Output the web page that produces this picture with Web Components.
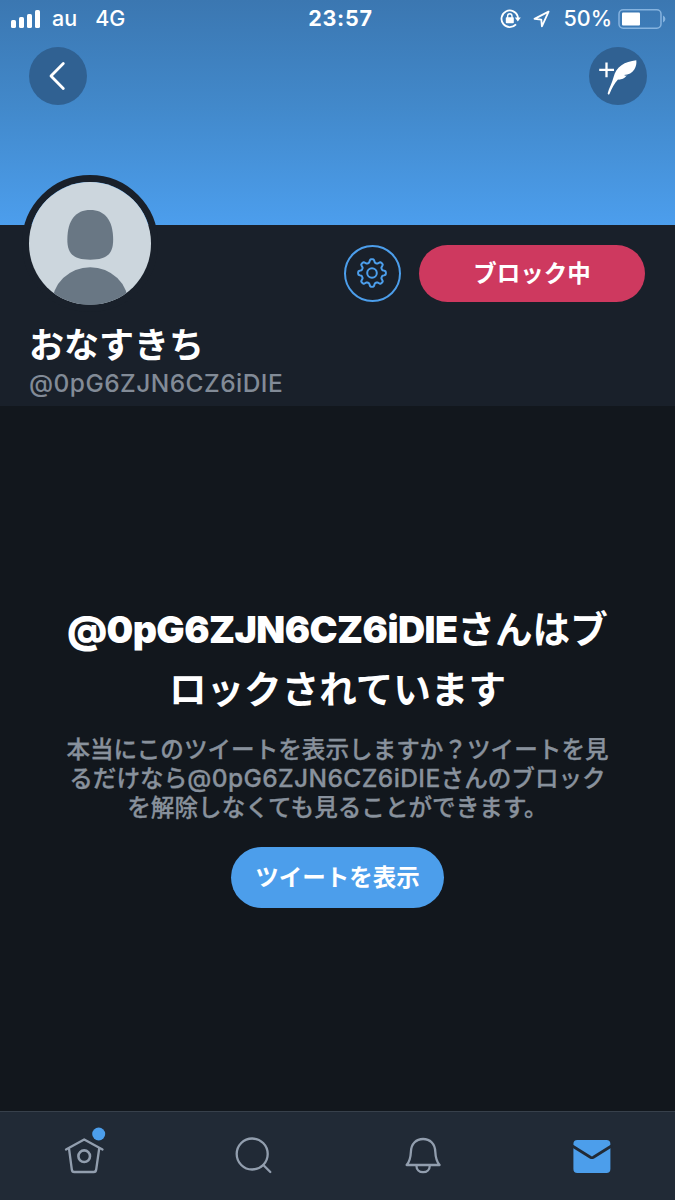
<!DOCTYPE html>
<html lang="ja">
<head>
<meta charset="utf-8">
<title>おなすきち</title>
<style>
html, body {
	margin: 0;
	height: 100%;
	background: #12171d;
}
</style>
</head>
<body>
<profile-page></profile-page>

<script>
const define = (name, html) => {
    const template = document.createElement("template");

    template.innerHTML = html;

    customElements.define(name, class extends HTMLElement {
        constructor() {
            super();

            this.attachShadow({ mode: "open" });
            this.shadowRoot.appendChild(template.content.cloneNode(true));
        }
    });
};

define("status-bar", `
<style>
:host {
	display: grid;
	grid-template-columns: 1fr auto 1fr;
	align-items: center;
	height: 37px;
	padding: 0 10px;
	font-size: 21.5px;
	font-weight: 500;
	line-height: 37px;
}

.left, .right {
	display: flex;
	align-items: center;
}

.right {
	justify-content: flex-end;
}

.carrier {
	margin-left: 12px;
}

.network {
	margin-left: 18px;
}

.time {
	font-weight: 700;
	letter-spacing: .75px;
	margin-left: 6px;
}

.lock {
	margin-right: 12px;
}

.arrow {
	margin-right: 13px;
}

.battery {
	margin-left: 6px;
	margin-right: -1px;
}

svg {
	display: block;
}
</style>
<div class="left">
	<svg width="30" height="18" viewBox="0 0 30 18" fill="#fff">
		<rect x="1" y="10" width="5" height="8" rx="1.6"/>
		<rect x="9" y="7" width="5" height="11" rx="1.6"/>
		<rect x="17" y="4" width="5" height="14" rx="1.6"/>
		<rect x="25" y="0" width="5" height="18" rx="1.6"/>
	</svg>
	<span class="carrier">au</span>
	<span class="network">4G</span>
</div>
<span class="time">23:57</span>
<div class="right">
	<svg class="lock" width="21" height="20" viewBox="0 0 21 20" fill="none" stroke="#fff" stroke-width="1.8">
		<path d="M17.7 7.2A8.3 8.3 0 1 0 16 15.3M17.7 7.2L18 10"/>
		<path d="M14.8 8.5h6l-3 4z" fill="#fff" stroke="none"/>
		<rect x="5.8" y="8.3" width="8" height="6" rx=".8" fill="#fff" stroke="none"/>
		<path d="M7.6 9V7a2.2 2.2 0 0 1 4.4 0v2" stroke-width="1.4"/>
	</svg>
	<svg class="arrow" width="17" height="18" viewBox="0 0 17 18" fill="none" stroke="#fff" stroke-width="1.8" stroke-linejoin="round">
		<path d="M15.6 1.6L1.500 8.900l6.800.700.600 6.700z"/>
	</svg>
	<span>50%</span>
	<svg class="battery" width="48" height="20" viewBox="0 0 48 20">
		<rect x="1" y=".8" width="42" height="18.4" rx="4.2" fill="none" stroke="#85b3df" stroke-width="1.5"/>
		<rect x="4" y="3.5" width="18" height="13" rx="1" fill="#fff"/>
		<path d="M45 6.5q2.4 1 2.4 3.5T45 13.5z" fill="#85b3df"/>
	</svg>
</div>
`);

define("round-button", `
<style>
:host {
	display: flex;
	align-items: center;
	justify-content: center;
	box-sizing: border-box;
	width: 58px;
	height: 58px;
	border-radius: 50%;
}
</style>
<slot></slot>
`);

define("pill-button", `
<style>
:host {
	display: flex;
	align-items: center;
	justify-content: center;
	border-radius: 31px;
	font-size: 23.5px;
	font-weight: 700;
	line-height: 1;
}
</style>
<slot></slot>
`);

define("profile-banner", `
<style>
:host {
	display: block;
	height: 225px;
	background: linear-gradient(#3b77b1 0, #4289cb 48%, #4c9eed 100%);
}

nav {
	display: flex;
	justify-content: space-between;
	padding: 9.5px 28.5px 0;
}

round-button {
	background: #306192;
}
</style>
<status-bar></status-bar>
<nav>
	<round-button>
		<svg width="58" height="58" viewBox="0 0 58 58" fill="none" stroke="#fff" stroke-width="2.8" stroke-linecap="round" stroke-linejoin="round">
			<path d="M34.3 16.5L22 29l12.3 12.5"/>
		</svg>
	</round-button>
	<round-button>
		<svg width="58" height="58" viewBox="0 0 58 58">
			<path d="M10.2 22.800h14.800M17.500 15.400v14.800" stroke="#fff" stroke-width="2.300"/>
			<path d="M47.300 13.300C41.500 14 36.500 15.500 32.500 18.200C28.500 21 25.800 25 24.600 30C23.200 36 20 41 18.700 46.300c0 1.500 1.300 1.700 1.900.400C22.800 41.500 25.500 36.300 29 32.600c3.200.2 6-.6 8.800-4-1 .2-2 .1-2.700-.5 4.700-.4 8-2.300 10.200-5.600 1.800-2.800 2.400-6 2-9.200z" fill="#fff"/>
		</svg>
	</round-button>
</nav>
`);

define("profile-avatar", `
<style>
:host {
	display: block;
	width: 122.5px;
	height: 122.5px;
	border: 7px solid #19202a;
	border-radius: 50%;
}

svg {
	display: block;
	border-radius: 50%;
}
</style>
<svg width="122.5" height="122.5" viewBox="0 0 123 123">
	<rect width="123" height="123" fill="#ccd6dd"/>
	<path d="M61.5 28C76 28 84.5 38 84.5 58c0 14-6 20-23 20s-23-6-23-20c0-20 8.500-30 23-30z" fill="#697784"/>
	<ellipse cx="61.500" cy="123" rx="38.500" ry="37.500" fill="#697784"/>
</svg>
`);

define("profile-header", `
<style>
:host {
	display: block;
	box-sizing: border-box;
	height: 181px;
	padding: 0 30px;
	background: #19202a;
}

.top {
	display: flex;
	align-items: flex-start;
	height: 91px;
}

profile-avatar {
	margin: -50px auto 0 -8.5px;
}

round-button {
	width: 57.5px;
	height: 57.5px;
	margin: 19.5px 18px 0 0;
	border: 2px solid #4c9eeb;
}

pill-button {
	width: 226px;
	height: 57px;
	margin-top: 20px;
	background: #ce395f;
}

h1 {
	margin: 0 0 0 -1px;
	padding-top: 4px;
	font-size: 35px;
	font-weight: 700;
	line-height: 50px;
}

p {
	margin: 0 0 0 -1px;
	padding-top: 1px;
	font-size: 24.5px;
	font-weight: 500;
	line-height: 25px;
	letter-spacing: .45px;
	color: #828b97;
}
</style>
<div class="top">
	<profile-avatar></profile-avatar>
	<round-button>
		<svg width="32" height="32" viewBox="-16 -16 32 32" fill="none" stroke="#4c9eeb" stroke-width="2" stroke-linejoin="round">
			<circle r="4.800"/>
			<path id="gear"/>
		</svg>
	</round-button>
	<pill-button>ブロック中</pill-button>
</div>
<h1>おなすきち</h1>
<p>@0pG6ZJN6CZ6iDIE</p>
`);

define("blocked-notice", `
<style>
:host {
	display: flex;
	flex-direction: column;
	align-items: center;
	flex: 1;
	text-align: center;
}

h2 {
	margin: 194px 0 0;
	font-size: 37.6px;
	font-weight: 700;
	line-height: 60px;
	white-space: nowrap;
}

h2 span {
	font-weight: 900;
	letter-spacing: -.55px;
}

p {
	margin: 15px 0 0;
	font-size: 23.6px;
	font-weight: 500;
	line-height: 29px;
	white-space: nowrap;
	color: #88919c;
	-webkit-text-stroke: .3px #88919c;
}

p span {
	font-size: 24.5px;
	line-height: 1;
	letter-spacing: .4px;
}

pill-button {
	width: 213px;
	height: 61px;
	margin-top: 25px;
	background: #4c9eeb;
}
</style>
<h2><span>@0pG6ZJN6CZ6iDIE</span>さんはブ<br>ロックされています</h2>
<p>本当にこのツイートを表示しますか？ツイートを見<br>るだけなら<span>@0pG6ZJN6CZ6iDIE</span>さんのブロック<br>を解除しなくても見ることができます。</p>
<pill-button>ツイートを表示</pill-button>
`);

define("tab-bar", `
<style>
:host {
	display: grid;
	grid-template-columns: repeat(4, 1fr);
	justify-items: center;
	box-sizing: border-box;
	height: 89px;
	padding-top: 15px;
	border-top: 1px solid #37404b;
	background: #212a36;
}

svg {
	fill: none;
	stroke: #929eae;
	stroke-width: 2.3;
	stroke-linecap: round;
	stroke-linejoin: round;
}
</style>
<svg width="50" height="50" viewBox="0 0 50 50">
	<path d="M7 22.500L25.200 12.500 43.500 22.500M10 21.500l2.800 21c.2 1.800 1 2.500 2.500 2.500h19.400c1.500 0 2.300-.7 2.500-2.500l3-21"/>
	<circle cx="25.200" cy="29.200" r="5.800" stroke-width="2.600"/>
	<circle cx="39.700" cy="7" r="6.500" fill="#4c9eeb" stroke="none"/>
</svg>
<svg width="50" height="50" viewBox="0 0 50 50">
	<circle cx="24.200" cy="27" r="15.500"/>
	<path d="M35.300 38l7 7"/>
</svg>
<svg width="50" height="50" viewBox="-.9 0 50 50">
	<path d="M8.700 38h33c-3-3.300-4-6.800-4.300-13.300C37 16.500 32 12 25.200 12S13.400 16.500 13 24.700C12.700 31.200 11.700 34.700 8.700 38zM18.500 38.500c0 4 2.900 6.700 6.700 6.700s6.700-2.700 6.700-6.700"/>
</svg>
<svg width="50" height="50" viewBox="0 0 50 50">
	<rect x="7.400" y="13" width="37" height="33" rx="4" fill="#4c9eeb" stroke="none"/>
	<path d="M6.400 19l18 11.200q1.500.8 3 0l18-11.200" stroke="#212a36" stroke-width="2.800"/>
</svg>
`);

define("profile-page", `
<style>
:host {
	display: flex;
	flex-direction: column;
	height: 1200px;
	overflow: hidden;
	color: #fff;
	font-family: Inter, "Noto Sans CJK JP", sans-serif;
}
</style>
<profile-banner></profile-banner>
<profile-header></profile-header>
<blocked-notice></blocked-notice>
<tab-bar></tab-bar>
`);

// Eight-toothed outline of the settings gear
const gearPath = () => {
    const points = [];

    for (let i = 0; i <= 96; i++) {
        const a = i / 96 * Math.PI * 2;
        const r = 12.2 + 1.7 * Math.tanh(2.2 * Math.cos(8 * a));

        points.push(`${(r * Math.sin(a)).toFixed(2)} ${(-r * Math.cos(a)).toFixed(2)}`);
    }

    return `M${points.join("L")}z`;
};

document.querySelector("profile-page").shadowRoot
    .querySelector("profile-header").shadowRoot
    .querySelector("#gear").setAttribute("d", gearPath());
</script>
</body>
</html>
